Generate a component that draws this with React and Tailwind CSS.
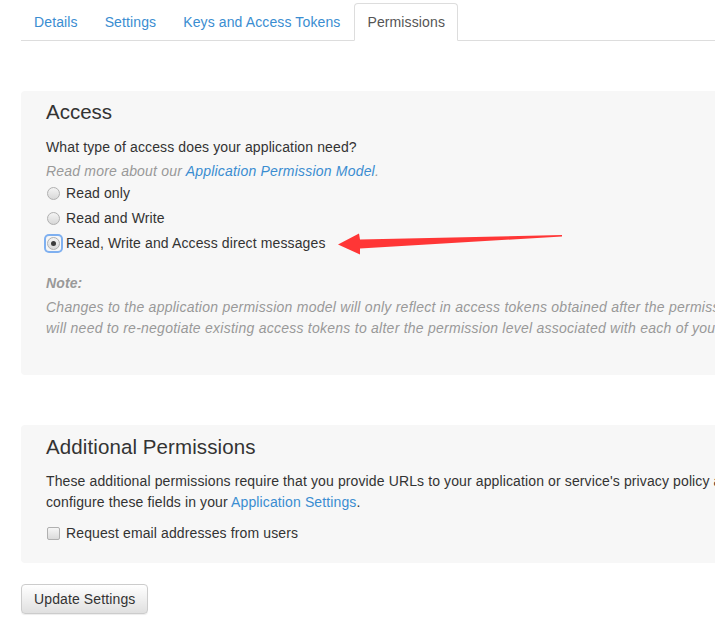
import React from "react";

function Radio({ checked, focused }) {
  return (
    <span
      className={
        "relative mr-[7px] flex h-[15px] w-[15px] shrink-0 items-center justify-center rounded-[3px] " +
        (focused ? "ring-2 ring-[#7fb0f0]" : "")
      }
    >
      <span className="flex h-[13px] w-[13px] items-center justify-center rounded-full border border-[#b0b0b0] bg-gradient-to-b from-[#f4f4f4] to-[#d8d8d8]">
        {checked && <span className="h-[5px] w-[5px] rounded-full bg-[#3c3c3c]" />}
      </span>
    </span>
  );
}

export default function App() {
  const font = { fontFamily: '"Liberation Sans", Arial, Helvetica, sans-serif' };
  return (
    <div className="relative w-full overflow-hidden bg-white text-[14px] tracking-[0.12px] text-[#333]" style={font}>
      <div className="w-[1100px]">
        {/* Tabs */}
        <ul className="ml-[21px] mt-[3px] flex border-b border-[#ddd]">
          {["Details", "Settings", "Keys and Access Tokens"].map((t) => (
            <li key={t} className="-mb-px mr-[1px]">
              <a className="block rounded-t-[4px] border border-transparent px-[12px] pb-[8px] pt-[8px] leading-[20px] text-[#3a8dd1]">
                {t}
              </a>
            </li>
          ))}
          <li className="-mb-px">
            <a className="block rounded-t-[4px] border border-[#ddd] border-b-white bg-white px-[12px] pb-[8px] pt-[8px] leading-[20px] text-[#555]">
              Permissions
            </a>
          </li>
        </ul>

        {/* Access panel */}
        <div className="ml-[21px] mt-[50px] rounded-[4px] bg-[#f7f7f7] pb-[36px] pl-[25px] pt-[9px]">
          <h3 className="text-[20.5px] font-normal leading-[24px] tracking-normal text-[#333]">Access</h3>
          <p className="mt-[13px] leading-[20px]">What type of access does your application need?</p>
          <p className="mt-[5px] italic leading-[19px] tracking-[0.2px] text-[#999]">
            Read more about our <a className="text-[#3a8dd1]">Application Permission Model</a>.
          </p>
          <div className="flex flex-col">
            <label className="flex h-[25px] items-center leading-[25px]">
              <Radio />
              <span className="-ml-[2px]">Read only</span>
            </label>
            <label className="flex h-[25px] items-center leading-[25px]">
              <Radio />
              <span className="-ml-[2px]">Read and Write</span>
            </label>
            <label className="flex h-[25px] items-center leading-[25px]">
              <Radio checked focused />
              <span className="-ml-[2px]">Read, Write and Access direct messages</span>
            </label>
          </div>
          <p className="mt-[17px] font-bold italic leading-[20px] text-[#999]">Note:</p>
          <p className="mt-[4px] whitespace-nowrap italic leading-[21px] tracking-[0.25px] text-[#999]">
            Changes to the application permission model will only reflect in access tokens obtained after the permission model change is saved. You
            <br />
            will need to re-negotiate existing access tokens to alter the permission level associated with each of your application's users.
          </p>
        </div>

        {/* Additional permissions panel */}
        <div className="ml-[21px] mt-[50px] rounded-[4px] bg-[#f7f7f7] pb-[20px] pl-[25px] pt-[10px]">
          <h3 className="text-[20.5px] font-normal leading-[24px] tracking-[0.1px] text-[#333]">Additional Permissions</h3>
          <p className="mt-[12px] whitespace-nowrap leading-[21px]">
            These additional permissions require that you provide URLs to your application or service's privacy policy and terms of service. You can
            <br />
            configure these fields in your <a className="text-[#3a8dd1]">Application Settings</a>.
          </p>
          <label className="mt-[10px] flex h-[20px] items-center leading-[20px]">
            <span className="ml-[1px] mr-[7px] h-[13px] w-[13px] rounded-[2px] border border-[#b0b0b0] bg-gradient-to-b from-[#f6f6f6] to-[#dadada]" />
            <span className="-ml-[1px]">Request email addresses from users</span>
          </label>
        </div>

        <button className="ml-[21px] mt-[21px] rounded-[4px] border border-[#ccc] bg-gradient-to-b from-white to-[#e0e0e0] px-[12px] py-[4px] leading-[20px] text-[#333] shadow-[0_1px_1px_rgba(0,0,0,0.075)]">
          Update Settings
        </button>
        <div className="h-[11px]" />
      </div>

      {/* Red arrow annotation */}
      <svg className="pointer-events-none absolute left-0 top-0" width="715" height="625">
        <polygon
          points="338,244.5 359,233.5 360,239.5 562,235 562,236.5 360,248.5 360,254.5"
          fill="#ff3636"
        />
      </svg>
    </div>
  );
}
